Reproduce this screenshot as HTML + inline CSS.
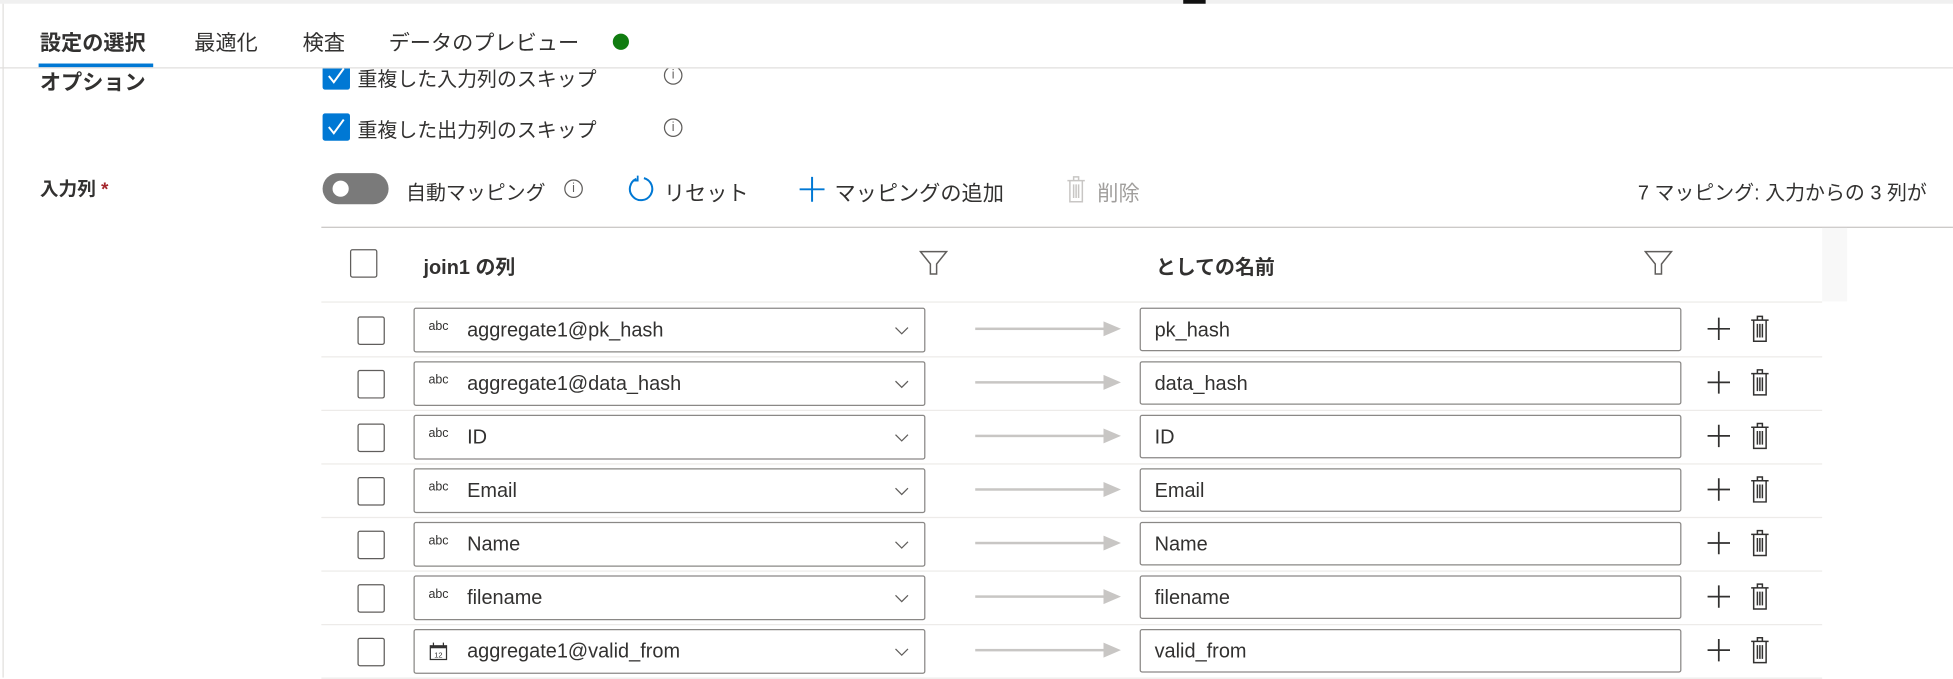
<!DOCTYPE html>
<html><head><meta charset="utf-8"><style>
html,body{margin:0;padding:0;width:1953px;height:678px;overflow:hidden;background:#fff}
#s{position:absolute;left:0;top:0;width:1568px;height:544px;transform:scale(1.2455);transform-origin:0 0;font-family:"Liberation Sans","Noto Sans CJK JP",sans-serif;color:#323130}
.a{position:absolute;white-space:nowrap}
.cb{position:absolute;width:20px;height:21px;border:1px solid #605e5c;border-radius:2px;background:#fff}
.cbc{position:absolute;width:22px;height:22px;background:#0078d4;border-radius:2px}
.info{position:absolute;width:13px;height:13px;border:1px solid #605e5c;border-radius:50%;font-size:10px;line-height:13px;text-align:center;color:#605e5c}
.row{position:absolute;left:258px;width:1205px;height:43px;border-bottom:1px solid #edebe9}
.dd{position:absolute;left:74px;top:4px;width:409px;height:34px;border:1px solid #8a8886;border-radius:2px;font-size:16px;line-height:34px}
.dd .t{position:absolute;left:42px;top:1px}
.dd .ab{position:absolute;left:11px;font-size:10px;top:-2px}
.ar{position:absolute;left:525px;top:20px;width:104px;height:2px;background:#c8c6c4}
.ah{position:absolute;left:628px;top:15px;border-left:14px solid #c8c6c4;border-top:6px solid transparent;border-bottom:6px solid transparent}
.tx{position:absolute;left:657px;top:4px;width:435px;height:35px;border:1px solid #8a8886;border-radius:2px;font-size:16px;line-height:36px;padding-left:11px;box-sizing:border-box}
.rb{left:29px;top:11px}
</style></head><body><div id="s">
<div class="a" style="left:0;top:0;width:1568px;height:3px;background:#f0f0f0"></div>
<div class="a" style="left:950px;top:0;width:18px;height:3px;background:#111"></div>
<div class="a" style="left:2px;top:3px;width:1px;height:541px;background:#e1dfdd"></div>
<div class="a" style="left:32px;top:20px;font-size:17px;font-weight:bold">設定の選択</div>
<div class="a" style="left:31px;top:51px;width:92px;height:3px;background:#0078d4"></div>
<div class="a" style="left:156px;top:20px;font-size:17px">最適化</div>
<div class="a" style="left:243px;top:20px;font-size:17px">検査</div>
<div class="a" style="left:312px;top:20px;font-size:17px">データのプレビュー</div>
<div class="a" style="left:492px;top:27px;width:13px;height:13px;border-radius:50%;background:#107c10"></div>
<div class="a" style="left:0;top:54px;width:1568px;height:1px;background:#e1dfdd"></div>
<div style="position:absolute;left:0;top:55px;width:1568px;height:489px;overflow:hidden">
<div class="a" style="left:32px;top:-3px;font-size:17px;font-weight:bold">オプション</div>
<div class="cbc" style="left:259px;top:-5px"><svg width="22" height="22"><path d="M5 11l4 5 8-11" stroke="#fff" stroke-width="1.6" fill="none"/></svg></div>
<div class="a" style="left:287px;top:-5px;font-size:16px">重複した入力列のスキップ</div>
<div class="info" style="left:533px;top:-2px">i</div>
</div>
<div class="cbc" style="left:259px;top:91px"><svg width="22" height="22"><path d="M5 11l4 5 8-11" stroke="#fff" stroke-width="1.6" fill="none"/></svg></div>
<div class="a" style="left:287px;top:91px;font-size:16px">重複した出力列のスキップ</div>
<div class="info" style="left:533px;top:95px">i</div>
<div class="a" style="left:32px;top:141px;font-size:15px;font-weight:bold">入力列 <span style="color:#a4262c">*</span></div>
<div class="a" style="left:259px;top:139px;width:53px;height:25px;border-radius:13px;background:#7a7a7a"><div style="position:absolute;left:8px;top:6px;width:13px;height:13px;border-radius:50%;background:#fff"></div></div>
<div class="a" style="left:326px;top:141px;font-size:16px">自動マッピング</div>
<div class="info" style="left:453px;top:144px">i</div>
<svg class="a" style="left:503px;top:140px" width="24" height="24"><path d="M8 3.5A9 9 0 1 0 14 3" stroke="#0078d4" stroke-width="1.6" fill="none"/><path d="M9 1v4H5" stroke="#0078d4" stroke-width="1.4" fill="none"/></svg>
<div class="a" style="left:533px;top:141px;font-size:17px">リセット</div>
<svg class="a" style="left:641px;top:141px" width="22" height="22"><path d="M11 1v20M1 11h20" stroke="#0078d4" stroke-width="1.6"/></svg>
<div class="a" style="left:670px;top:141px;font-size:17px">マッピングの追加</div>
<svg class="a" style="left:854px;top:140px" width="20" height="24"><path d="M3 5h14M8 5V2h4v3M5 5v17h10V5M8 8v11M10 8v11M12 8v11" stroke="#c8c6c4" stroke-width="1.2" fill="none"/></svg>
<div class="a" style="left:881px;top:141px;font-size:17px;color:#a19f9d">削除</div>
<div class="a" style="left:1315px;top:141px;font-size:16px">7 マッピング: 入力からの 3 列が</div>
<div class="a" style="left:258px;top:182px;width:1310px;height:1px;background:#c8c6c4"></div>
<div class="a" style="left:1463px;top:183px;width:20px;height:59px;background:#f8f8f8"></div>
<div class="a" style="left:258px;top:242px;width:1205px;height:1px;background:#edebe9"></div>
<div class="cb" style="left:281px;top:200px"></div>
<div class="a" style="left:340px;top:201px;font-size:16px;font-weight:bold">join1 の列</div>
<svg class="a" style="left:738px;top:200px" width="24" height="22"><path d="M1 2h21l-8 10v8h-5v-8z" stroke="#605e5c" stroke-width="1.2" fill="none"/></svg>
<div class="a" style="left:928px;top:201px;font-size:16px;font-weight:bold">としての名前</div>
<svg class="a" style="left:1320px;top:200px" width="24" height="22"><path d="M1 2h21l-8 10v8h-5v-8z" stroke="#605e5c" stroke-width="1.2" fill="none"/></svg>

<div class="row" style="top:243px"><div class="cb rb"></div><div class="dd"><span class="ab">abc</span><span class="t">aggregate1@pk_hash</span><svg style="position:absolute;left:385px;top:14px" width="12" height="8"><path d="M1 1l5 5 5-5" stroke="#605e5c" fill="none"/></svg></div><div class="ar"></div><div class="ah"></div><div class="tx">pk_hash</div><svg style="position:absolute;left:1112px;top:11px" width="20" height="20"><path d="M10 1v18M1 10h18" stroke="#323130" stroke-width="1.4"/></svg><svg style="position:absolute;left:1146px;top:9px" width="18" height="24"><path d="M2 5h14M7 5V2h4v3M4 5v17h10V5M7 8v11M9 8v11M11 8v11" stroke="#323130" stroke-width="1.2" fill="none"/></svg></div>
<div class="row" style="top:286px"><div class="cb rb"></div><div class="dd"><span class="ab">abc</span><span class="t">aggregate1@data_hash</span><svg style="position:absolute;left:385px;top:14px" width="12" height="8"><path d="M1 1l5 5 5-5" stroke="#605e5c" fill="none"/></svg></div><div class="ar"></div><div class="ah"></div><div class="tx">data_hash</div><svg style="position:absolute;left:1112px;top:11px" width="20" height="20"><path d="M10 1v18M1 10h18" stroke="#323130" stroke-width="1.4"/></svg><svg style="position:absolute;left:1146px;top:9px" width="18" height="24"><path d="M2 5h14M7 5V2h4v3M4 5v17h10V5M7 8v11M9 8v11M11 8v11" stroke="#323130" stroke-width="1.2" fill="none"/></svg></div>
<div class="row" style="top:329px"><div class="cb rb"></div><div class="dd"><span class="ab">abc</span><span class="t">ID</span><svg style="position:absolute;left:385px;top:14px" width="12" height="8"><path d="M1 1l5 5 5-5" stroke="#605e5c" fill="none"/></svg></div><div class="ar"></div><div class="ah"></div><div class="tx">ID</div><svg style="position:absolute;left:1112px;top:11px" width="20" height="20"><path d="M10 1v18M1 10h18" stroke="#323130" stroke-width="1.4"/></svg><svg style="position:absolute;left:1146px;top:9px" width="18" height="24"><path d="M2 5h14M7 5V2h4v3M4 5v17h10V5M7 8v11M9 8v11M11 8v11" stroke="#323130" stroke-width="1.2" fill="none"/></svg></div>
<div class="row" style="top:372px"><div class="cb rb"></div><div class="dd"><span class="ab">abc</span><span class="t">Email</span><svg style="position:absolute;left:385px;top:14px" width="12" height="8"><path d="M1 1l5 5 5-5" stroke="#605e5c" fill="none"/></svg></div><div class="ar"></div><div class="ah"></div><div class="tx">Email</div><svg style="position:absolute;left:1112px;top:11px" width="20" height="20"><path d="M10 1v18M1 10h18" stroke="#323130" stroke-width="1.4"/></svg><svg style="position:absolute;left:1146px;top:9px" width="18" height="24"><path d="M2 5h14M7 5V2h4v3M4 5v17h10V5M7 8v11M9 8v11M11 8v11" stroke="#323130" stroke-width="1.2" fill="none"/></svg></div>
<div class="row" style="top:415px"><div class="cb rb"></div><div class="dd"><span class="ab">abc</span><span class="t">Name</span><svg style="position:absolute;left:385px;top:14px" width="12" height="8"><path d="M1 1l5 5 5-5" stroke="#605e5c" fill="none"/></svg></div><div class="ar"></div><div class="ah"></div><div class="tx">Name</div><svg style="position:absolute;left:1112px;top:11px" width="20" height="20"><path d="M10 1v18M1 10h18" stroke="#323130" stroke-width="1.4"/></svg><svg style="position:absolute;left:1146px;top:9px" width="18" height="24"><path d="M2 5h14M7 5V2h4v3M4 5v17h10V5M7 8v11M9 8v11M11 8v11" stroke="#323130" stroke-width="1.2" fill="none"/></svg></div>
<div class="row" style="top:458px"><div class="cb rb"></div><div class="dd"><span class="ab">abc</span><span class="t">filename</span><svg style="position:absolute;left:385px;top:14px" width="12" height="8"><path d="M1 1l5 5 5-5" stroke="#605e5c" fill="none"/></svg></div><div class="ar"></div><div class="ah"></div><div class="tx">filename</div><svg style="position:absolute;left:1112px;top:11px" width="20" height="20"><path d="M10 1v18M1 10h18" stroke="#323130" stroke-width="1.4"/></svg><svg style="position:absolute;left:1146px;top:9px" width="18" height="24"><path d="M2 5h14M7 5V2h4v3M4 5v17h10V5M7 8v11M9 8v11M11 8v11" stroke="#323130" stroke-width="1.2" fill="none"/></svg></div>
<div class="row" style="top:501px"><div class="cb rb"></div><div class="dd"><svg style="position:absolute;left:11px;top:9px" width="16" height="16"><rect x="1.5" y="3.5" width="13" height="11" fill="none" stroke="#323130"/><rect x="1.5" y="3.5" width="13" height="2" fill="#323130"/><path d="M4 1v3M12 1v3" stroke="#323130"/><text x="8" y="13" font-size="6" text-anchor="middle" fill="#323130" font-family="Liberation Sans">12</text></svg><span class="t">aggregate1@valid_from</span><svg style="position:absolute;left:385px;top:14px" width="12" height="8"><path d="M1 1l5 5 5-5" stroke="#605e5c" fill="none"/></svg></div><div class="ar"></div><div class="ah"></div><div class="tx">valid_from</div><svg style="position:absolute;left:1112px;top:11px" width="20" height="20"><path d="M10 1v18M1 10h18" stroke="#323130" stroke-width="1.4"/></svg><svg style="position:absolute;left:1146px;top:9px" width="18" height="24"><path d="M2 5h14M7 5V2h4v3M4 5v17h10V5M7 8v11M9 8v11M11 8v11" stroke="#323130" stroke-width="1.2" fill="none"/></svg></div>
</div></body></html>
